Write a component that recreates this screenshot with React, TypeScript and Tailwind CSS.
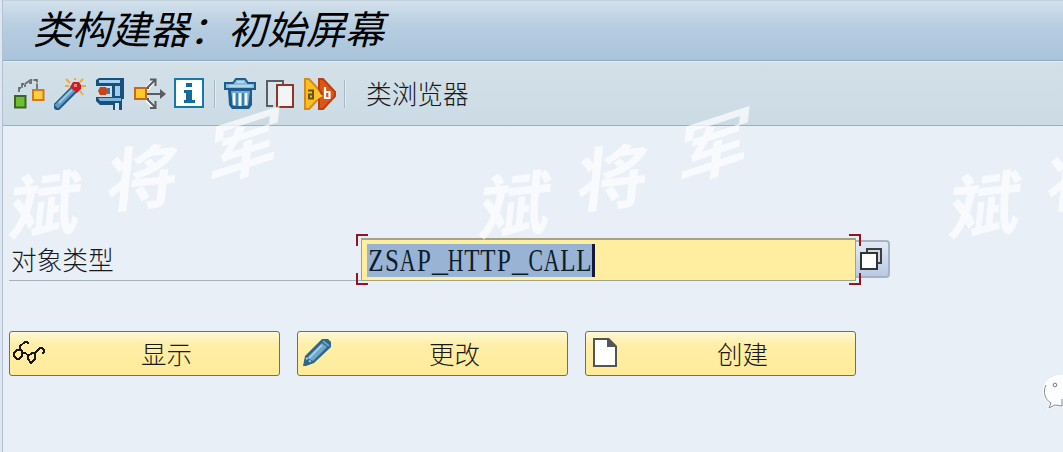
import { FC, ReactNode } from "react";

interface IconProps {
    children: ReactNode
}
const Icon: FC<IconProps> = ({ children }) => (
    <svg width="32" height="32" viewBox="0 0 32 32" className="shrink-0" fill="none">
        {children}
    </svg>
)

const OtherObjectIcon = () => (
    <Icon>
        <path d="M5 14V10H8V6H11V9M11 6L15 3V5H17V2H23V11" stroke="#6a6d71" strokeWidth="1.8" strokeDasharray="6 1.2"/>
        <rect x="1" y="18" width="10.5" height="11.5" fill="#6fbf2c" stroke="#3b6426" strokeWidth="2"/>
        <rect x="19" y="12" width="10.5" height="10" fill="#ffce3b" stroke="#d17a22" strokeWidth="2"/>
    </Icon>
)

const WandIcon = () => (
    <Icon>
        <path d="M3.5 28L19 12.5" stroke="#22577f" strokeWidth="8" strokeLinecap="square"/>
        <path d="M4 27L18.5 12.5" stroke="#5d9cc9" strokeWidth="5" strokeLinecap="square"/>
        <path d="M5 25L18 12" stroke="#9cc9e6" strokeWidth="1.8"/>
        <path d="M19 4H25L27 7V11L23 15L16 9Z" fill="#c81e27"/>
        <rect x="20" y="6" width="3" height="3" fill="#ef8080"/>
        <path d="M12 1L16 5M21 0V2M29 1L26 4M27 8H32M26 13L29 17M11 8H15" stroke="#e9ad37" strokeWidth="2"/>
    </Icon>
)

const ClampIcon = () => (
    <Icon>
        <path d="M2 2L5 0H30V21H28V32H19V27H6L2 23V19H18V8H2Z" fill="#17507c"/>
        <path d="M5 2H26V5H5Z" fill="#a6d2ef"/>
        <path d="M21 8H26V18H21Z" fill="#a3cdea"/>
        <path d="M4 20H27V23H6Z" fill="#7db5dc"/>
        <path d="M21 25H25V32H21Z" fill="#d3e4ee"/>
        <path d="M6 9H12L14 13L12 17H6L4 13Z" fill="#c7441d"/>
        <path d="M13 10H16V16H13Z" fill="#2f80ad"/>
    </Icon>
)

const WhereUsedIcon = () => (
    <Icon>
        <path d="M14 12V9L20 3M14 20V23L20 29" stroke="#fff" strokeWidth="4"/>
        <path d="M11 16H31M14 11V9L21 2M14 20V22L21 29M16 1.5H21.5V8M16 30H21.5V23" stroke="#595c60" strokeWidth="2"/>
        <path d="M26 11L32 16L26 21Z" fill="#595c60"/>
        <rect x="1" y="10" width="11" height="11" fill="#ffc928" stroke="#c9671e" strokeWidth="2"/>
    </Icon>
)

const InfoIcon = () => (
    <Icon>
        <rect x="1" y="1" width="28" height="28" fill="#fff" stroke="#1679a5" strokeWidth="2"/>
        <path d="M12 5H18V9H12ZM10 12H18V22H21V25H10V22H12V15H10Z" fill="#116b9c"/>
    </Icon>
)

const TrashIcon = () => (
    <Icon>
        <path d="M4 12H28V27L25 31H8L5 27Z" fill="#1d5d8d"/>
        <path d="M7 13H26L24 28H9Z" fill="#6fadd4"/>
        <path d="M10 15V27M16 15V28M22 15V27" stroke="#f2f8fc" strokeWidth="2.6"/>
        <path d="M13 15V28M19 15V28" stroke="#2c6f9f" strokeWidth="1.5"/>
        <path d="M1 11V5H9L12 1H21L24 5H31V11Z" fill="#8bbcda" stroke="#1d5d8d" strokeWidth="2"/>
        <path d="M5 8H28M13 4H20" stroke="#c3dff0" strokeWidth="1.6"/>
    </Icon>
)

const CopyIcon = () => (
    <Icon>
        <path d="M19 6V3H3V28H9" fill="#dbe5ec" stroke="#5a5d61" strokeWidth="2"/>
        <rect x="13" y="7" width="16" height="22" fill="#f3f4f5" stroke="#963326" strokeWidth="2"/>
    </Icon>
)

const RenameIcon = () => (
    <Icon>
        <path d="M1 1H5L17 14V18L5 31H1Z" fill="#ffbe21" stroke="#d58a1b" strokeWidth="2"/>
        <path d="M15 1H19L31 14V18L19 31H15V21L18 16L15 11Z" fill="#df5417" stroke="#b4430f" strokeWidth="2"/>
        <path d="M12 13L19 18L12 22Z" fill="#ffc62d"/>
        <path d="M4 12.5H9V20.5H5V16.5H9" stroke="#62551d" strokeWidth="2"/>
        <path d="M21 9V20H25.5V14H21" stroke="#fff" strokeWidth="2.2"/>
    </Icon>
)

const GlassesIcon = () => (
    <Icon>
        <path d="M7 12H4L1 15V18L4 21H6L9 18V12H7V8L12 4H14L16 6M9 15H12L15 17M15 16V21L18 25L22 21V15H19L15 18M22 15L27 10H29L31 12V14L29 16" stroke="#1a1707" strokeWidth="1.9" strokeLinejoin="bevel" shapeRendering="crispEdges"/>
    </Icon>
)

const PencilIcon = () => (
    <Icon>
        <path d="M2 28L4 18L21 1H27L30 4V9L13 25L5 28Z" fill="#2c6789"/>
        <path d="M6 20L21 5L26 9L12 23Z" fill="#6fa6ca"/>
        <path d="M8 20L21 7" stroke="#a3cce6" strokeWidth="2"/>
        <path d="M22 3L28 8" stroke="#6da1c0" strokeWidth="2"/>
        <path d="M5 20L11 25" stroke="#b2d5e9" strokeWidth="1.8" strokeDasharray="2 2"/>
    </Icon>
)

const PageIcon = () => (
    <Icon>
        <path d="M5 1H19L27 9V28H5Z" fill="#fff" stroke="#55554f" strokeWidth="2"/>
        <path d="M18 0V9H28V8L20 0Z" fill="#55565c"/>
    </Icon>
)

const Separator = () => <div className="h-7 w-0.5 border-l border-[#a9b9c6] bg-[#e2ebf2]"/>

interface ActionProps {
    label: string
    icon: ReactNode
}
const ActionButton: FC<ActionProps> = ({ label, icon }) => (
    <button className="flex h-[45px] w-[271px] items-center rounded-[3px] border border-[#70705c] bg-linear-to-b from-[#fff9d4] via-[#feeea7] via-30% to-[#ffeb99] pl-[3px]">
        <span className="h-8 w-8">{icon}</span>
        <span className="w-[232px] pb-0.5 pl-[11px] text-center text-[25.5px] leading-none">{label}</span>
    </button>
)

const charScale = (char: string) => {
    if (char === '_') return ''
    return 'AHC'.includes(char) ? 'scale-x-[.68]' : 'scale-x-[.78]'
}

// every character sits in a 16px cell, like the terminal font does
const FixedText: FC<{ value: string }> = ({ value }) => (
    <span className="whitespace-nowrap pl-px font-['Liberation_Serif',serif] text-[32px] leading-none font-normal text-[#0b1c2c]">
        {value.split('').map((char, i) => (
            <span key={i} className="inline-flex w-4 justify-center">
                <span className={charScale(char)}>{char}</span>
            </span>
        ))}
    </span>
)

const Watermark: FC<{ last?: boolean }> = ({ last }) => (
    <div className="relative h-[150px] w-[470px] shrink-0 font-bold text-[70px] leading-none text-white/70">
        <span className="absolute left-[11px] top-[70px] rotate-6 -skew-y-12">斌</span>
        <span className="absolute left-[108px] top-[43px] rotate-6 -skew-y-12">将</span>
        {!last && <span className="absolute left-[210px] top-[12px] rotate-6 -skew-y-24">军</span>}
    </div>
)

export default function App() {
    return (
        <div className="relative flex h-[452px] w-[1063px] overflow-hidden bg-[#e8eff7] font-['Noto_Sans_CJK_SC',sans-serif] font-light text-[#17191b]">
            <div className="w-[3px] shrink-0 border-r border-[#b3c0d2] bg-[#dde7f1]"/>
            <div className="flex grow flex-col">
                <header className="flex h-[61px] items-center border-b border-[#8fa9bf] border-t border-t-[#c4d2de] bg-linear-to-b from-[#d3e1ec] via-[#b8cee1] via-40% to-[#a9c3da] pb-1.5 pl-[30px]">
                    <h1 className="text-[39px] leading-none font-normal italic text-black">类构建器：初始屏幕</h1>
                </header>
                <div className="flex h-[65px] items-center gap-2 border-b border-[#9fadbc] border-t border-t-[#e6eef4] bg-linear-to-b from-[#d3e0e8] to-[#cbdbe5] pl-[11px]">
                    <OtherObjectIcon/>
                    <WandIcon/>
                    <ClampIcon/>
                    <WhereUsedIcon/>
                    <InfoIcon/>
                    <Separator/>
                    <TrashIcon/>
                    <CopyIcon/>
                    <RenameIcon/>
                    <Separator/>
                    <span className="ml-3 pb-0.5 text-[25.7px] leading-none">类浏览器</span>
                </div>
                <main className="flex flex-col pl-1.5 pt-[108px]">
                    <div className="flex h-[51px] items-start">
                        <label htmlFor="object-type" className="mt-1 flex h-[43px] w-[352px] items-center border-b border-[#a5b1bf] pl-0.5 text-[25.7px] leading-none">对象类型</label>
                        <div id="object-type" className="relative mt-1 flex h-[43px] w-[495px] items-center border border-t-2 border-[#a5a386] bg-[#ffee9f] pl-[5px]">
                            <div className="flex h-[33px] w-[228px] items-center border-r-[3px] border-[#17163b] bg-[#98b3d3]">
                                <FixedText value="ZSAP_HTTP_CALL"/>
                            </div>
                            <i className="absolute -left-1.5 -top-1.5 h-3 w-3 border-l-2 border-t-2 border-[#901722]"/>
                            <i className="absolute -bottom-[5px] -left-1.5 h-3 w-3 border-b-2 border-l-2 border-[#901722]"/>
                            <i className="absolute -right-1.5 -top-1.5 z-10 h-3 w-3 border-r-2 border-t-2 border-[#901722]"/>
                            <i className="absolute -bottom-[5px] -right-1.5 z-10 h-3 w-3 border-b-2 border-r-2 border-[#901722]"/>
                        </div>
                        <button className="mt-1.5 flex h-[38px] w-[34px] items-center rounded-r-sm border-2 border-l-0 border-[#a9b2c3] bg-linear-to-b from-[#e2eaf6] to-[#b9cae5] pl-[3px]">
                            <svg width="24" height="24" viewBox="0 0 24 24" className="shrink-0">
                                <path d="M8 2H22V16H8Z" fill="#d4d9dd" stroke="#3b3f42" strokeWidth="2"/>
                                <path d="M2 6H18V22H2Z" fill="#fff" stroke="#303437" strokeWidth="2"/>
                            </svg>
                        </button>
                    </div>
                    <div className="mt-[46px] flex gap-[17px]">
                        <ActionButton label="显示" icon={<GlassesIcon/>}/>
                        <ActionButton label="更改" icon={<PencilIcon/>}/>
                        <ActionButton label="创建" icon={<PageIcon/>}/>
                    </div>
                </main>
            </div>
            <div className="pointer-events-none absolute left-0 top-[96px] flex">
                <Watermark/>
                <Watermark/>
                <Watermark last/>
            </div>
            <svg width="20" height="38" viewBox="0 0 20 38" className="absolute right-0 top-[372px]" fill="none">
                <path d="M20 4C9 3 1 11 1 19C1 25 4 29 8 31L6 36L12 33L20 34Z" fill="#fbfdfe" stroke="#fff" strokeWidth="2"/>
                <path d="M3 13C0 19 1 27 8 31L6 36L12 33L19 34V27" stroke="#858b91"/>
                <circle cx="12" cy="13" r="1.8" stroke="#777d83"/>
            </svg>
        </div>
    )
}
